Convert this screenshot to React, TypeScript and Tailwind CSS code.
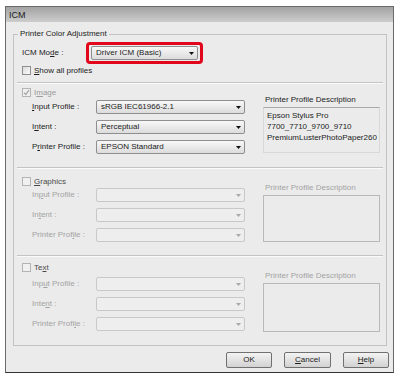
import React from "react";

function Arrow({ dim }: { dim?: boolean }) {
  return (
    <svg width="5" height="3" viewBox="0 0 5 3" className="shrink-0">
      <path d="M0 0H5L2.5 3Z" fill={dim ? "#a8a8a8" : "#111111"} />
    </svg>
  );
}

function Select({ text, dim, wide }: { text?: string; dim?: boolean; wide?: boolean }) {
  return (
    <div
      className={`flex h-[14px] items-center justify-between rounded-[2px] border pl-[4px] pr-[3px] ${
        wide ? "w-[107px]" : "w-[149px]"
      } ${
        dim
          ? "border-[#c8c8c8] bg-[#eeeeee] text-[#a3a3a3]"
          : "border-[#8e8e8e] bg-gradient-to-b from-[#f8f8f8] to-[#dcdcdc] text-[#1c1c1c]"
      }`}
    >
      <span className="whitespace-nowrap">{text ?? ""}</span>
      <Arrow dim={dim} />
    </div>
  );
}

function Check({ checked, dim }: { checked?: boolean; dim?: boolean }) {
  return (
    <span
      className={`flex h-[9px] w-[9px] shrink-0 items-center justify-center border ${
        dim
          ? "border-[#b4b4b4] bg-[#f0f0f0]"
          : "border-[#8f8f8f] bg-gradient-to-br from-[#dadada] to-[#fbfbfb]"
      }`}
    >
      {checked && (
        <svg width="7" height="7" viewBox="0 0 7 7">
          <path d="M1 3.6L2.8 5.4L6 1.2" fill="none" stroke="#a6a6a6" strokeWidth="1.3" />
        </svg>
      )}
    </span>
  );
}

function Row({ label, text, dim }: { label: React.ReactNode; text?: string; dim?: boolean }) {
  return (
    <div className="flex h-[14px] items-center">
      <span className={`w-[64px] whitespace-nowrap ${dim ? "text-[#a3a3a3]" : "text-[#1c1c1c]"}`}>{label}</span>
      <Select text={text} dim={dim} />
    </div>
  );
}

function Separator() {
  return <div className="mx-[3px] h-[2px] border-t border-b border-t-[#c4c4c4] border-b-[#fafafa]" />;
}

export default function App() {
  return (
    <div className="h-[376px] w-[396px] bg-white pl-[5px] pt-[6px] font-['Liberation_Sans',Arial,sans-serif] text-[8px] leading-[10px] text-[#1c1c1c]">
      <div className="flex h-[367px] w-[389px] flex-col border border-[#6a6a6a] border-b-[#333333] bg-[#ebebeb]">
        <div className="flex h-[15px] shrink-0 items-center bg-gradient-to-b from-[#a3a3a3] to-[#cdcdcd] pl-[3px] text-[9px] text-[#1a1a1a]">
          ICM
        </div>
        <div className="flex flex-1 flex-col pl-[7px] pr-[4px]">
          <fieldset className="mt-[7px] w-[374px] border border-[#c2c2c2]">
            <legend className="ml-[4px] px-[2px] leading-[10px]">Printer Color Adjustment</legend>

            <div className="mt-[3px] flex h-[22px] items-center pl-[8px]">
              <span className="w-[64px] whitespace-nowrap">
                ICM Mo<u>d</u>e :
              </span>
              <div className="rounded-[4px] border-[3px] border-[#e2061c] px-[2px] py-[1px]">
                <Select text="Driver ICM (Basic)" wide />
              </div>
            </div>

            <div className="mt-[1px] flex h-[11px] items-center gap-[3px] pl-[8px]">
              <Check />
              <span>
                <u>S</u>how all profiles
              </span>
            </div>

            <div className="mt-[6px]">
              <Separator />
            </div>

            {/* Image */}
            <div className="flex items-start">
              <div className="pb-[13px] pl-[8px]">
                <div className="mt-[3px] flex h-[11px] items-center gap-[3px]">
                  <Check checked dim />
                  <span className="text-[#9c9c9c]">
                    I<u>m</u>age
                  </span>
                </div>
                <div className="mt-[2px] flex flex-col gap-[6px] pl-[10px]">
                  <Row label={<><u>I</u>nput Profile :</>} text="sRGB IEC61966-2.1" />
                  <Row label={<>I<u>n</u>tent :</>} text="Perceptual" />
                  <Row label={<>P<u>r</u>inter Profile :</>} text="EPSON Standard" />
                </div>
              </div>
              <div className="ml-[18px] w-[117px] pt-[11px]">
                <div className="pl-[2px] whitespace-nowrap">Printer Profile Description</div>
                <div className="mt-[2px] h-[46px] border border-[#d8d8d8] border-t-[#a9a9a9] pl-[3px] pt-[2px] leading-[11px]">
                  <div>Epson Stylus Pro</div>
                  <div>7700_7710_9700_9710</div>
                  <div>PremiumLusterPhotoPaper260</div>
                </div>
              </div>
            </div>

            <Separator />

            {/* Graphics */}
            <div className="flex items-start">
              <div className="pb-[13px] pl-[8px]">
                <div className="mt-[7px] flex h-[11px] items-center gap-[3px]">
                  <Check dim />
                  <span className="text-[#4a4a4a]">
                    <u>G</u>raphics
                  </span>
                </div>
                <div className="mt-[1px] flex flex-col gap-[6px] pl-[10px]">
                  <Row dim label={<>In<u>p</u>ut Profile :</>} />
                  <Row dim label={<>In<u>t</u>ent :</>} />
                  <Row dim label={<>Printer Prof<u>i</u>le :</>} />
                </div>
              </div>
              <div className="ml-[18px] w-[117px] pt-[14px]">
                <div className="pl-[2px] whitespace-nowrap text-[#a3a3a3]">Printer Profile Description</div>
                <div className="mt-[2px] h-[47px] border border-[#b9b9b9]" />
              </div>
            </div>

            <Separator />

            {/* Text */}
            <div className="flex items-start">
              <div className="pb-[14px] pl-[8px]">
                <div className="mt-[5px] flex h-[11px] items-center gap-[3px]">
                  <Check dim />
                  <span className="text-[#4a4a4a]">
                    Te<u>x</u>t
                  </span>
                </div>
                <div className="mt-[4px] flex flex-col gap-[6px] pl-[10px]">
                  <Row dim label={<>Inp<u>u</u>t Profile :</>} />
                  <Row dim label={<>Inte<u>n</u>t :</>} />
                  <Row dim label={<>Printer Profi<u>l</u>e :</>} />
                </div>
              </div>
              <div className="ml-[18px] w-[117px] pt-[14px]">
                <div className="pl-[2px] whitespace-nowrap text-[#a3a3a3]">Printer Profile Description</div>
                <div className="mt-[2px] h-[49px] border border-[#b9b9b9]" />
              </div>
            </div>
          </fieldset>

          <div className="mt-[6px] flex justify-end gap-[12px]">
            <div className="flex h-[16px] w-[46px] items-center justify-center rounded-[2px] border border-[#707070] bg-gradient-to-b from-[#f3f3f3] to-[#d2d2d2]">
              OK
            </div>
            <div className="flex h-[16px] w-[47px] items-center justify-center rounded-[2px] border border-[#707070] bg-gradient-to-b from-[#f3f3f3] to-[#d2d2d2]">
              <span>
                <u>C</u>ancel
              </span>
            </div>
            <div className="flex h-[16px] w-[46px] items-center justify-center rounded-[2px] border border-[#707070] bg-gradient-to-b from-[#f3f3f3] to-[#d2d2d2]">
              <span>
                <u>H</u>elp
              </span>
            </div>
          </div>
        </div>
      </div>
    </div>
  );
}
